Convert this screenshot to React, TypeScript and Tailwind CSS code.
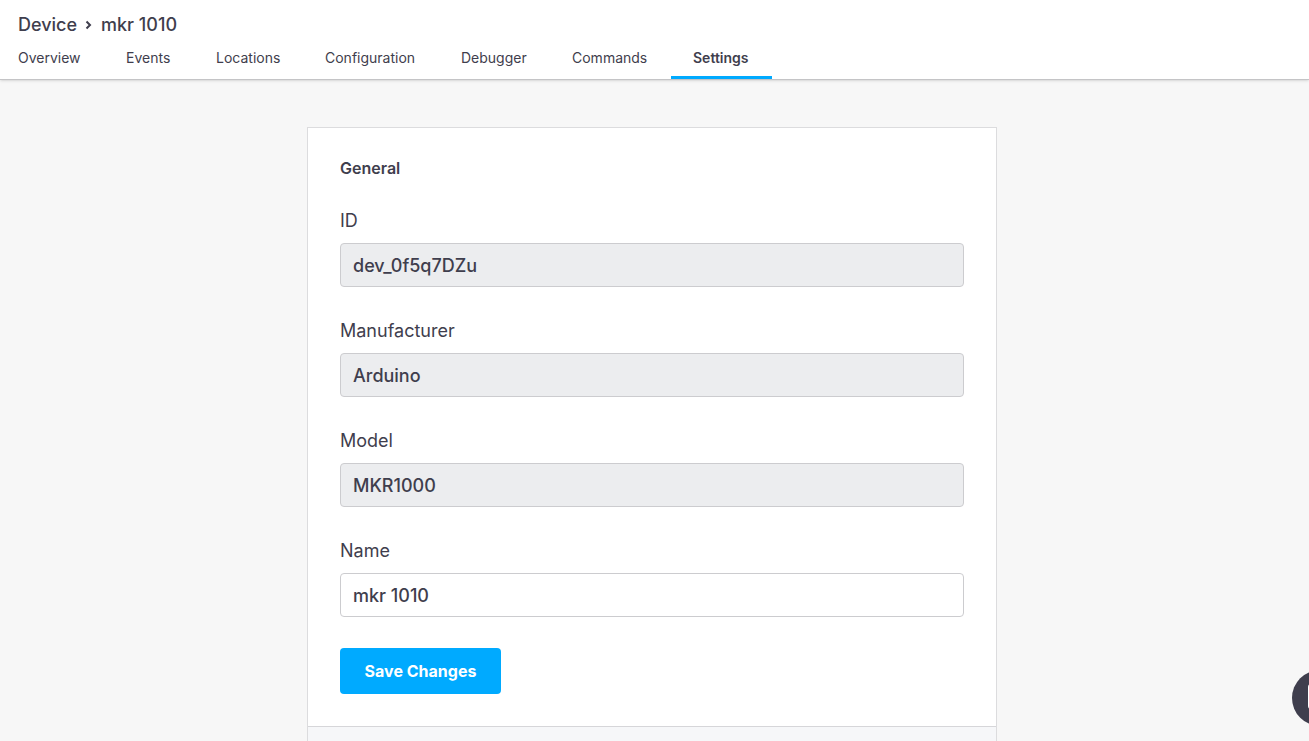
type Tab = {
    label: string;
    width: string;
    active?: boolean;
};

type FieldProps = {
    id: string;
    label: string;
    value: string;
    disabled?: boolean;
};

const TABS: Tab[] = [
    { label: "Overview", width: "min-w-[108px]" },
    { label: "Events", width: "min-w-[90px]" },
    { label: "Locations", width: "min-w-[109px]" },
    { label: "Configuration", width: "min-w-[136px]" },
    { label: "Debugger", width: "min-w-[111px]" },
    { label: "Commands", width: "min-w-[121px]" },
    { label: "Settings", width: "min-w-[101px]", active: true },
];

function Field({ id, label, value, disabled }: FieldProps) {
    return (
        <div className="mb-[31px]">
            <label htmlFor={id} className="block mb-[9px] text-[18px] leading-[26px]">
                {label}
            </label>
            <input
                id={id}
                type="text"
                defaultValue={value}
                disabled={disabled}
                className="block w-full h-11 px-3 rounded border border-[#cccccf] bg-white text-[18px] font-medium text-[#3f3e4d] outline-none focus:border-[#00aaff] disabled:bg-[#ecedef]"
            />
        </div>
    );
}

function Header() {
    return (
        <header className="relative bg-white border-b border-[#c4c4c6] shadow-sm">
            <div className="flex items-center gap-2 px-[18px] pt-3 text-[18px] leading-[26px] font-medium">
                <a href="#device">Device</a>
                <svg width="8" height="10" viewBox="0 0 8 10" fill="none" stroke="currentColor" strokeWidth="2" aria-hidden="true">
                    <path d="M1.5 1.5 5 5 1.5 8.5" />
                </svg>
                <span>mkr 1010</span>
            </div>
            <nav className="flex -ml-1 h-[41px] text-[14px]">
                {TABS.map((tab) => (
                    <a
                        key={tab.label}
                        href={`#${tab.label.toLowerCase()}`}
                        className={`${tab.width} px-[22px] pt-2.5 leading-5 whitespace-nowrap border-b-[3px] ${tab.active ? "border-[#00aaff] font-semibold" : "border-transparent"}`}
                    >
                        {tab.label}
                    </a>
                ))}
            </nav>
        </header>
    );
}

export default function App() {
    return (
        <div className="flex flex-col h-screen overflow-hidden bg-[#f7f7f7] text-[#3f3e4d] font-['Inter','Liberation_Sans',sans-serif]">
            <Header />

            <main className="flex-1 flex justify-center pt-[47px] pr-[5px]">
                <div className="flex flex-col w-full max-w-[690px] border border-b-0 border-[#dcdcde] bg-[#f6f7f9]">
                    <form className="p-8 bg-white border-b border-[#d6d6d9]">
                        <h2 className="mb-8 text-[16px] leading-4 font-semibold">General</h2>
                        <Field id="device-id" label="ID" value="dev_0f5q7DZu" disabled />
                        <Field id="manufacturer" label="Manufacturer" value="Arduino" disabled />
                        <Field id="model" label="Model" value="MKR1000" disabled />
                        <Field id="name" label="Name" value="mkr 1010" />
                        <button
                            type="button"
                            className="h-[46px] min-w-[161px] px-5 rounded bg-[#00aaff] hover:bg-[#0099e6] text-[16px] font-bold text-white"
                        >
                            Save Changes
                        </button>
                    </form>
                </div>
            </main>

            <button
                type="button"
                aria-label="Open chat"
                className="fixed bottom-[15px] -right-[39px] flex items-center justify-center w-14 h-14 rounded-full bg-[#3f3e4d]"
            >
                <svg width="24" height="28" viewBox="0 0 24 28" fill="#fff" aria-hidden="true">
                    <path d="M3 0h18a3 3 0 0 1 3 3v25l-5-3H3a3 3 0 0 1-3-3V3a3 3 0 0 1 3-3Z" />
                </svg>
            </button>
        </div>
    );
}
